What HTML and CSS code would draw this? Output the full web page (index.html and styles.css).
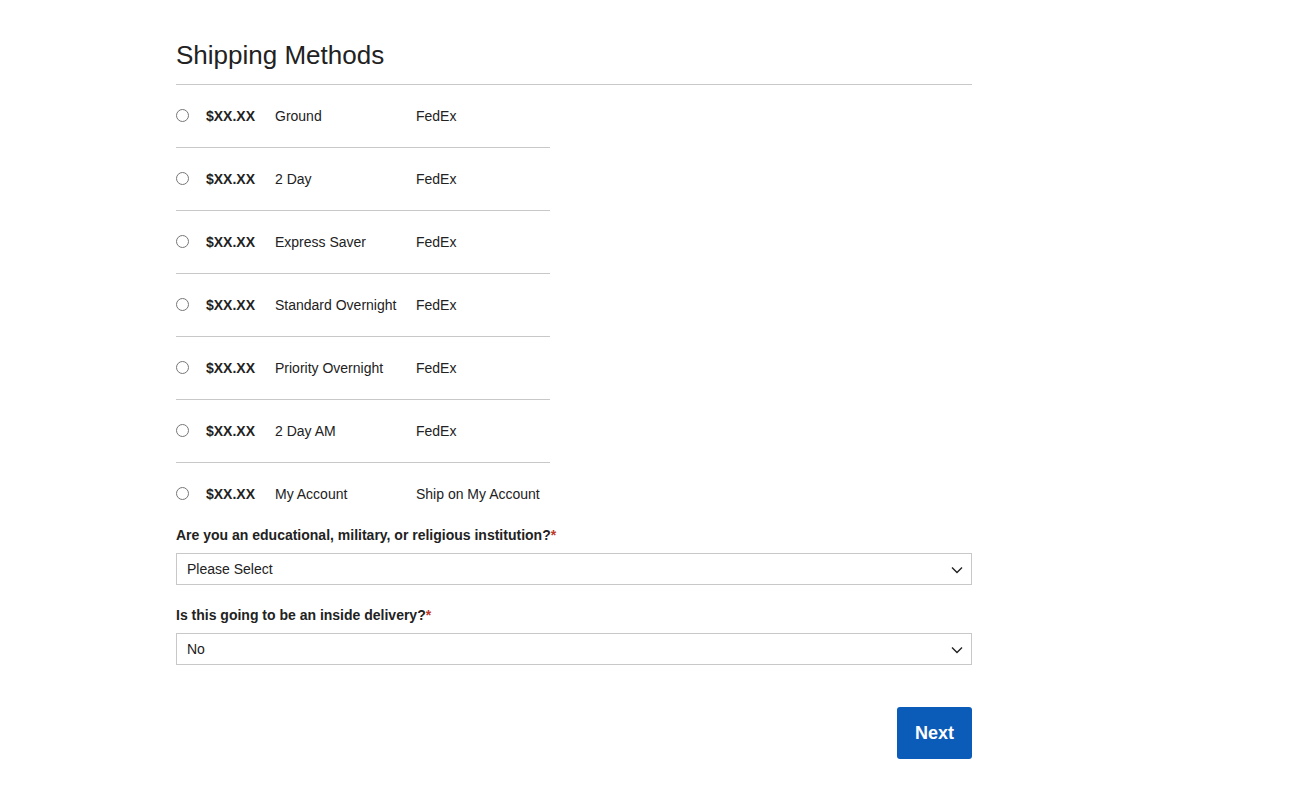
FILE: index.html
```html
<!DOCTYPE html>
<html lang="en">
<head>
    <meta charset="UTF-8">
    <meta name="viewport" content="width=device-width, initial-scale=1.0">
    <title>Shipping Methods</title>
    <link rel="stylesheet" href="styles.css">
</head>
<body>
    <div class="page">
        <h1 class="title">Shipping Methods</h1>

        <!-- shipping options -->
        <div class="methods">
            <label class="method">
                <input type="radio" name="ship">
                <span class="price">$XX.XX</span>
                <span>Ground</span>
                <span>FedEx</span>
            </label>
            <label class="method">
                <input type="radio" name="ship">
                <span class="price">$XX.XX</span>
                <span>2 Day</span>
                <span>FedEx</span>
            </label>
            <label class="method">
                <input type="radio" name="ship">
                <span class="price">$XX.XX</span>
                <span>Express Saver</span>
                <span>FedEx</span>
            </label>
            <label class="method">
                <input type="radio" name="ship">
                <span class="price">$XX.XX</span>
                <span>Standard Overnight</span>
                <span>FedEx</span>
            </label>
            <label class="method">
                <input type="radio" name="ship">
                <span class="price">$XX.XX</span>
                <span>Priority Overnight</span>
                <span>FedEx</span>
            </label>
            <label class="method">
                <input type="radio" name="ship">
                <span class="price">$XX.XX</span>
                <span>2 Day AM</span>
                <span>FedEx</span>
            </label>
            <label class="method">
                <input type="radio" name="ship">
                <span class="price">$XX.XX</span>
                <span>My Account</span>
                <span>Ship on My Account</span>
            </label>
        </div>

        <div class="field first">
            <label class="field-label">Are you an educational, military, or religious institution?<span class="req">*</span></label>
            <div class="select-wrap">
                <select class="select">
                    <option>Please Select</option>
                    <option>Yes</option>
                    <option>No</option>
                </select>
                <svg class="chevron" width="12" height="8" viewBox="0 0 12 8"><path d="M1 1.5l5 5 5-5" fill="none" stroke="#222" stroke-width="1.4"/></svg>
            </div>
        </div>

        <div class="field">
            <label class="field-label">Is this going to be an inside delivery?<span class="req">*</span></label>
            <div class="select-wrap">
                <select class="select">
                    <option>No</option>
                    <option>Yes</option>
                </select>
                <svg class="chevron" width="12" height="8" viewBox="0 0 12 8"><path d="M1 1.5l5 5 5-5" fill="none" stroke="#222" stroke-width="1.4"/></svg>
            </div>
        </div>

        <div class="actions">
            <button class="next">Next</button>
        </div>
    </div>
</body>
</html>
```

FILE: styles.css
```css
body {
    margin: 0;
    font-family: "Liberation Sans", Arial, sans-serif;
    font-size: 14px;
    color: #222;
    background: #fff;
}
.page {
    width: 796px;
    margin-left: 176px;
    padding-top: 40px;
}
.title {
    margin: 0;
    font-size: 26px;
    font-weight: normal;
    line-height: 30px;
    padding-bottom: 14px;
    border-bottom: 1px solid #c8c8c8;
}
.methods {
    width: 374px;
}
.method {
    display: grid;
    grid-template-columns: 30px 69px 141px auto;
    align-items: center;
    height: 61px;
    padding-bottom: 1px;
    border-bottom: 1px solid #c8c8c8;
    line-height: 16px;
}
.method:last-child {
    border-bottom: none;
}
.method input {
    margin: 0;
    width: 13px;
    height: 13px;
}
.price {
    font-weight: bold;
}
.field {
    margin-top: 22px;
}
.field.first {
    margin-top: 2px;
}
.field-label {
    display: block;
    font-weight: bold;
    line-height: 16px;
    margin-bottom: 10px;
}
.req {
    color: #c0392b;
}
.select-wrap {
    position: relative;
}
.select {
    display: block;
    width: 100%;
    height: 32px;
    padding: 0 30px 0 10px;
    border: 1px solid #c8c8c8;
    border-radius: 0;
    background: #fff;
    font-family: inherit;
    font-size: 14px;
    color: #222;
    appearance: none;
    -webkit-appearance: none;
}
.chevron {
    position: absolute;
    right: 9px;
    top: 13px;
    pointer-events: none;
}
.actions {
    display: flex;
    justify-content: flex-end;
    margin-top: 42px;
}
.next {
    width: 75px;
    height: 52px;
    border: none;
    border-radius: 3px;
    background: #0b5cb8;
    color: #fff;
    font-family: inherit;
    font-size: 18px;
    font-weight: bold;
}
```
